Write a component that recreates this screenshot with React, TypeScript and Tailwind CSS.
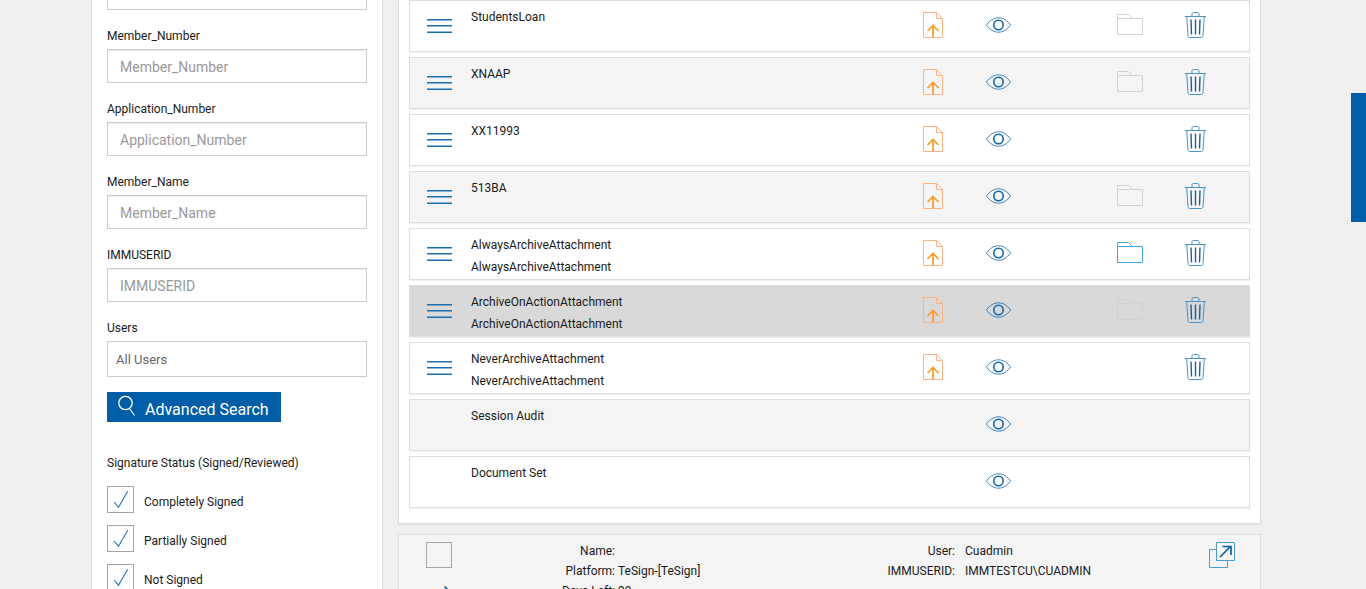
import React, { useState } from "react";

type DocumentRow = {
    name: string;
    subtitle?: string;
    actions: boolean;
    archive?: "on" | "off";
    selected?: boolean;
};

const documents: DocumentRow[] = [
    { name: "StudentsLoan", actions: true, archive: "off" },
    { name: "XNAAP", actions: true, archive: "off" },
    { name: "XX11993", actions: true },
    { name: "513BA", actions: true, archive: "off" },
    { name: "AlwaysArchiveAttachment", subtitle: "AlwaysArchiveAttachment", actions: true, archive: "on" },
    { name: "ArchiveOnActionAttachment", subtitle: "ArchiveOnActionAttachment", actions: true, archive: "off", selected: true },
    { name: "NeverArchiveAttachment", subtitle: "NeverArchiveAttachment", actions: true },
    { name: "Session Audit", actions: false },
    { name: "Document Set", actions: false },
];

const searchFields = ["Member_Number", "Application_Number", "Member_Name", "IMMUSERID"];
const statuses = ["Completely Signed", "Partially Signed", "Not Signed"];

const MenuIcon = () => (
    <svg width="26" height="16" viewBox="0 0 26 16" fill="none" stroke="#1a6fb0" strokeWidth="1.6">
        <path d="M0 1.8h25M0 7.8h25M0 14.2h25" />
    </svg>
);

const UploadIcon = () => (
    <svg width="26" height="26" viewBox="0 0 26 26" fill="none">
        <path d="M3.5 .5h13l6 6v19h-19z" stroke="#fcb283" />
        <path d="M16.5 .5v6h6" stroke="#fcb283" />
        <path d="M13 25V14M7.5 19l5.5-5.5 5.5 5.5" stroke="#fb9a24" strokeWidth="1.7" />
    </svg>
);

const EyeIcon = () => (
    <svg width="26" height="26" viewBox="0 0 26 26" fill="none" stroke="#1066ab">
        <path d="M.4 13C4 8.2 8 5.8 12.5 5.8S21 8.2 24.6 13C21 17.8 17 20.2 12.5 20.2S4 17.8 .4 13z" strokeWidth=".8" />
        <circle cx="12.5" cy="13" r="4.7" strokeWidth="1.6" />
    </svg>
);

const FolderIcon = ({ on }: { on: boolean }) => (
    <svg width="26" height="26" viewBox="0 0 26 26" fill="none" stroke={on ? "#41a5da" : "#d0d2d4"}>
        <path d="M.5 22.5v-20h11l4 4h10v16zM.5 6.5h15" />
    </svg>
);

const TrashIcon = () => (
    <svg width="26" height="26" viewBox="0 0 26 26" fill="none" stroke="#4a93c3">
        <path d="M2 4.5h21M9 4V2c0-1 .5-1.5 1.5-1.5h4c1 0 1.5.5 1.5 1.5v2M3.7 4.5l1.3 19c.1 1.3.7 2 1.7 2h11.600c1 0 1.600-.7 1.700-2l1.300-19" />
        <path d="M8 7.5l.5 15M12.5 7.5v15M17 7.5l-.5 15" stroke="#1261a8" strokeWidth="1.4" />
    </svg>
);

const ExternalIcon = () => (
    <svg width="26" height="26" viewBox="0 0 26 26" fill="none" stroke="#4b9ccd">
        <path d="M7.5 .5h18v18h-18zM7.5 7.5h-7v18h18v-7" />
        <path d="M11 15L21.5 4.5M13.5 4.5h8.500V13" stroke="#0a62a9" strokeWidth="1.7" />
    </svg>
);

const iconButton = "flex h-[26px] w-[26px] items-center justify-center";

const Row = ({ doc, index }: { doc: DocumentRow; index: number }) => {
    const background = doc.selected ? "bg-[#d9d9d9]" : index % 2 ? "bg-[#f4f4f4]" : "bg-white";
    return (
        <li className={`flex h-[52px] border border-[#dedede] pl-[17px] pr-10 shadow-[0_1px_1px_rgba(0,0,0,0.05)] ${background}`}>
            <div className="w-11 pt-[17px]">
                {doc.actions && (
                    <button type="button" aria-label={`Menu ${doc.name}`} className="block">
                        <MenuIcon />
                    </button>
                )}
            </div>
            <div className="flex-1 pt-[5px] leading-[22px]">
                <p>{doc.name}</p>
                {doc.subtitle && <p>{doc.subtitle}</p>}
            </div>
            <div className="flex w-[289px] justify-between pt-[11px]">
                {doc.actions ? (
                    <button type="button" aria-label="Upload" className={iconButton}><UploadIcon /></button>
                ) : (
                    <span className={iconButton} />
                )}
                <button type="button" aria-label="View" className={iconButton}><EyeIcon /></button>
                <span className={iconButton} />
                {doc.archive ? (
                    <button type="button" aria-label="Archive" className={iconButton}><FolderIcon on={doc.archive === "on"} /></button>
                ) : (
                    <span className={iconButton} />
                )}
                {doc.actions ? (
                    <button type="button" aria-label="Delete" className={iconButton}><TrashIcon /></button>
                ) : (
                    <span className={iconButton} />
                )}
            </div>
        </li>
    );
};

const App = () => {
    const [checked, setChecked] = useState<string[]>(statuses);

    const toggleStatus = (status: string) => {
        setChecked(checked.includes(status) ? checked.filter((s) => s !== status) : [...checked, status]);
    };

    return (
        <div className="h-screen overflow-hidden bg-[#f0f0f0] pr-3.5 font-['Roboto',sans-serif] text-xs text-[#1a1a1a]">
            <div className="mx-auto flex max-w-[1170px] items-start gap-[15px]">
                {/* Search panel */}
                <aside className="min-h-screen w-[292px] shrink-0 border-x border-[#dedede] bg-white px-[15px] shadow-[0_1px_1px_rgba(0,0,0,0.05)]">
                    <form onSubmit={(e) => e.preventDefault()}>
                        <input
                            aria-label="Search"
                            className="mb-4 block h-2.5 w-full border border-t-0 border-[#ccc] bg-white px-3 text-sm"
                        />
                        {searchFields.map((field) => (
                            <div key={field} className="mb-4">
                                <label htmlFor={field} className="mb-[3px] block leading-5">{field}</label>
                                <input
                                    id={field}
                                    type="text"
                                    placeholder={field}
                                    className="block h-[34px] w-full border border-[#ccc] bg-white px-3 pt-0.5 text-sm shadow-[inset_0_1px_1px_rgba(0,0,0,0.075)] placeholder:text-[#999]"
                                />
                            </div>
                        ))}
                        <label htmlFor="users" className="mb-[3px] block leading-5">Users</label>
                        <select id="users" className="block h-9 w-full appearance-none border border-[#ccc] bg-white px-2 pt-0.5 text-[13px] text-[#666]">
                            <option>All Users</option>
                        </select>

                        <button type="submit" className="mt-[15px] flex h-[30px] items-start gap-2.5 bg-[#005ea8] pl-2.5 pr-3 text-base text-white">
                            <svg width="18" height="24" viewBox="0 0 18 24" fill="none" stroke="white">
                                <circle cx="8.5" cy="11" r="6.7" strokeWidth="1.3" />
                                <path d="M12.5 16.5l5 7" strokeWidth="1.1" />
                            </svg>
                            <span className="pt-1.5 leading-6">Advanced Search</span>
                        </button>

                        {/* Signature status */}
                        <fieldset className="mt-[31px]">
                            <legend className="mb-[13px] leading-5">Signature Status (Signed/Reviewed)</legend>
                            <div className="flex flex-col gap-3">
                                {statuses.map((status) => (
                                    <label key={status} className="flex h-[27px] items-center gap-2.5">
                                        <span className="grid h-[27px] w-[27px]">
                                            <input
                                                type="checkbox"
                                                checked={checked.includes(status)}
                                                onChange={() => toggleStatus(status)}
                                                className="peer col-start-1 row-start-1 appearance-none border border-[#a5a5a5] bg-white"
                                            />
                                            <svg
                                                viewBox="0 0 27 27"
                                                fill="none"
                                                stroke="#2277b9"
                                                className="pointer-events-none invisible col-start-1 row-start-1 peer-checked:visible"
                                            >
                                                <path d="M7 16l4.5 5.200L20.700 5.300" strokeWidth="1.1" />
                                            </svg>
                                        </span>
                                        <span className="pt-1 leading-5">{status}</span>
                                    </label>
                                ))}
                            </div>
                        </fieldset>
                    </form>
                </aside>

                {/* Sessions */}
                <main className="flex min-w-0 flex-1 flex-col gap-2.5">
                    <section className="border border-t-0 border-[#dedede] bg-white px-2.5 pb-[15px] shadow-[0_1px_1px_rgba(0,0,0,0.05)]">
                        <ul className="flex flex-col gap-[5px]">
                            {documents.map((doc, index) => (
                                <Row key={doc.name} doc={doc} index={index} />
                            ))}
                        </ul>
                    </section>

                    <section className="flex items-start border border-[#dedede] bg-[#f4f4f4] pb-4 pl-[27px] pr-[25px] pt-1.5 leading-5">
                        <div className="w-[120px] pt-px">
                            <input
                                type="checkbox"
                                aria-label="Select session"
                                className="block h-[26px] w-[26px] appearance-none border border-[#a5a5a5] bg-[#f4f4f4]"
                            />
                            <button type="button" aria-label="Expand session" className="mt-[17px] block">
                                <svg width="26" height="16" viewBox="0 0 26 16" fill="none" stroke="#0a62a9" strokeWidth="1.7">
                                    <path d="M0 8.5h25M18.5 1.5l7 7-7 7" />
                                </svg>
                            </button>
                        </div>
                        <dl className="grid w-[340px] grid-cols-[69px_1fr] gap-x-[3px]">
                            <dt className="text-right">Name:</dt>
                            <dd></dd>
                            <dt className="text-right">Platform:</dt>
                            <dd>TeSign-[TeSign]</dd>
                            <dt className="text-right">Days Left:</dt>
                            <dd>99</dd>
                        </dl>
                        <dl className="grid flex-1 grid-cols-[69px_1fr] gap-x-2.5">
                            <dt className="text-right">User:</dt>
                            <dd>Cuadmin</dd>
                            <dt className="text-right">IMMUSERID:</dt>
                            <dd>IMMTESTCU\CUADMIN</dd>
                        </dl>
                        <button type="button" aria-label="Open session" className="pt-px">
                            <ExternalIcon />
                        </button>
                    </section>
                </main>
            </div>

            {/* Side tab */}
            <button type="button" aria-label="Open side panel" className="fixed right-0 top-[93px] h-[129px] w-[15px] bg-[#005ea8]" />
        </div>
    );
};

export default App;
